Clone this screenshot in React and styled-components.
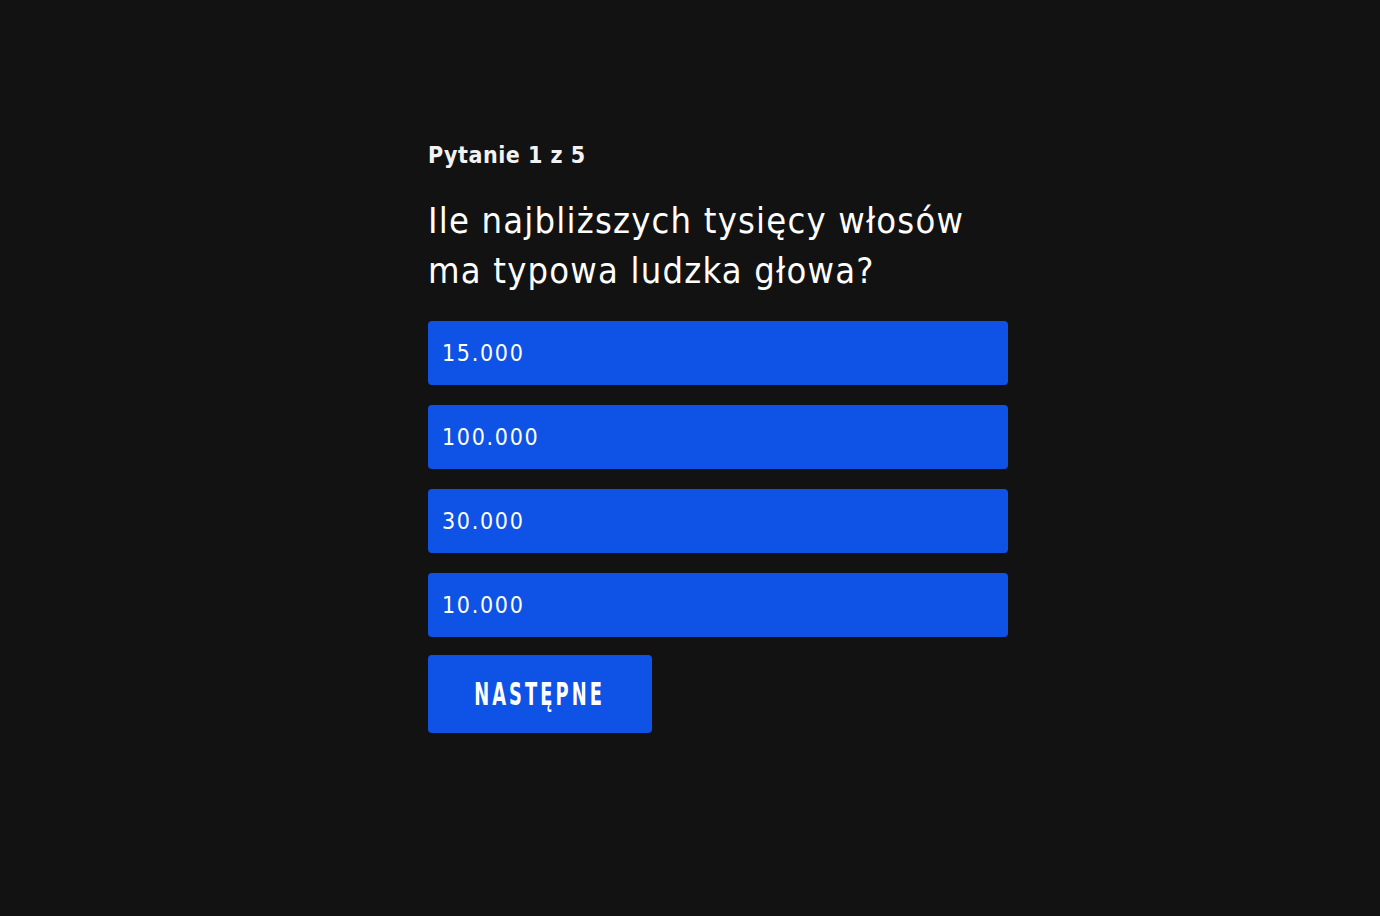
import React, { useState } from "react";
import styled, { createGlobalStyle } from "styled-components";

const GlobalStyle = createGlobalStyle`
  * { box-sizing: border-box; }
  html, body {
    margin: 0;
    background: #121212;
    font-family: "DejaVu Sans Condensed", "DejaVu Sans", sans-serif;
    font-stretch: condensed;
  }
`;

const Page = styled.main`
  min-height: 916px;
  display: flex;
  justify-content: center;
  padding: 138px 0 0 56px;
`;

const Quiz = styled.section`
  width: 580px;
  display: flex;
  flex-direction: column;
`;

const Counter = styled.p`
  margin: 0 0 24px;
  color: #f2f2f2;
  font-size: 23px;
  font-weight: bold;
  line-height: 34px;
  letter-spacing: 0.5px;
`;

const Question = styled.h1`
  margin: 0 0 25px;
  color: #ffffff;
  font-size: 36px;
  font-weight: normal;
  line-height: 50px;
  letter-spacing: 1.2px;
`;

const Answers = styled.ul`
  list-style: none;
  margin: 0;
  padding: 0;
  display: flex;
  flex-direction: column;
  gap: 20px;
`;

const Answer = styled.li`
  height: 64px;
  display: flex;
  align-items: center;
  padding: 0 14px;
  background: ${(p) => (p.$selected ? "#0a3fb8" : "#0f52e6")};
  border-radius: 4px;
  color: #ffffff;
  font-size: 23px;
  letter-spacing: 1.7px;
  cursor: pointer;
`;

const NextButton = styled.button`
  margin-top: 18px;
  width: 224px;
  height: 78px;
  border: none;
  border-radius: 4px;
  background: #0f52e6;
  color: #ffffff;
  font-family: inherit;
  font-stretch: condensed;
  font-size: 32px;
  font-weight: bold;
  cursor: pointer;
`;

const ButtonLabel = styled.span`
  display: inline-block;
  letter-spacing: 5px;
  transform: scaleX(0.62);
`;

const answers = ["15.000", "100.000", "30.000", "10.000"];

export default function App() {
  const [selected, setSelected] = useState(null);
  return (
    <>
      <GlobalStyle />
      <Page>
        <Quiz>
          <Counter>Pytanie 1 z 5</Counter>
          <Question>
            Ile najbliższych tysięcy włosów
            <br />
            ma typowa ludzka głowa?
          </Question>
          <Answers>
            {answers.map((a, i) => (
              <Answer key={a} $selected={selected === i} onClick={() => setSelected(i)}>
                {a}
              </Answer>
            ))}
          </Answers>
          <div>
            <NextButton>
              <ButtonLabel>NASTĘPNE</ButtonLabel>
            </NextButton>
          </div>
        </Quiz>
      </Page>
    </>
  );
}
